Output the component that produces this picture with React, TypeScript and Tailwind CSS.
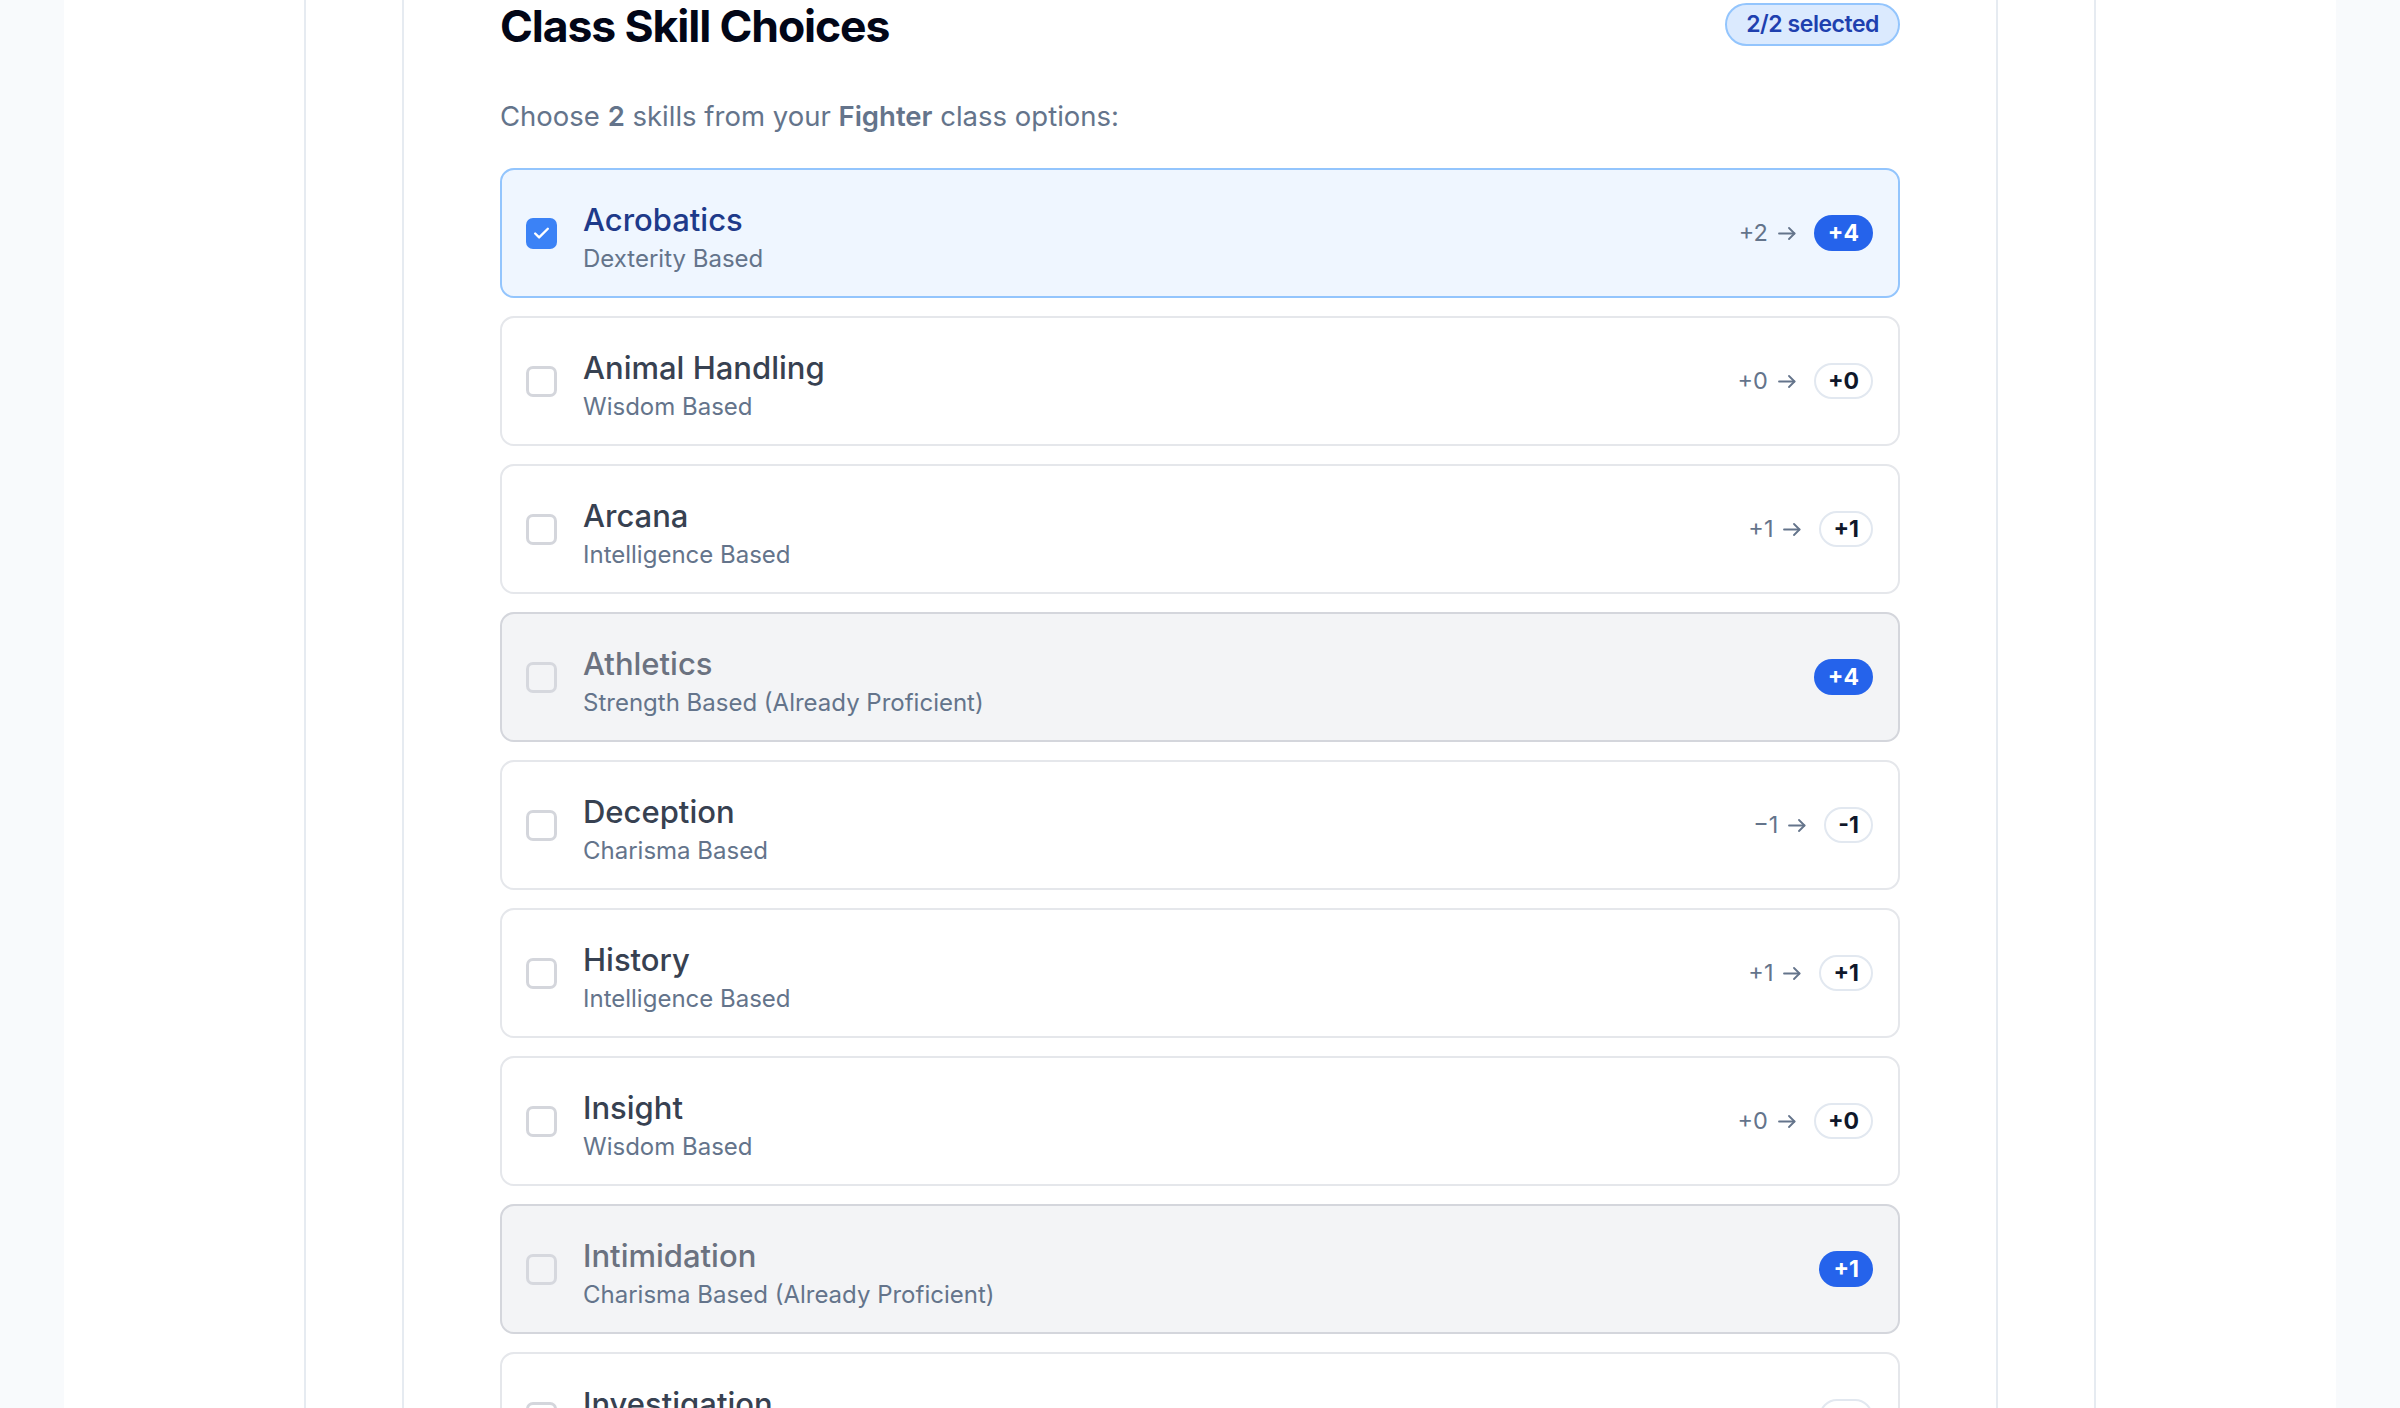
import React from "react";
import { Check } from "lucide-react";

type Skill = {
  name: string;
  ability: string;
  base?: string;
  total: string;
  state: "selected" | "normal" | "proficient";
};

const skills: Skill[] = [
  { name: "Acrobatics", ability: "Dexterity Based", base: "+2", total: "+4", state: "selected" },
  { name: "Animal Handling", ability: "Wisdom Based", base: "+0", total: "+0", state: "normal" },
  { name: "Arcana", ability: "Intelligence Based", base: "+1", total: "+1", state: "normal" },
  { name: "Athletics", ability: "Strength Based (Already Proficient)", total: "+4", state: "proficient" },
  { name: "Deception", ability: "Charisma Based", base: "\u22121", total: "-1", state: "normal" },
  { name: "History", ability: "Intelligence Based", base: "+1", total: "+1", state: "normal" },
  { name: "Insight", ability: "Wisdom Based", base: "+0", total: "+0", state: "normal" },
  { name: "Intimidation", ability: "Charisma Based (Already Proficient)", total: "+1", state: "proficient" },
  { name: "Investigation", ability: "Intelligence Based", base: "+1", total: "+1", state: "normal" },
];

function Arrow() {
  return (
    <svg width="18" height="13" viewBox="0 0 18 13" fill="none" className="shrink-0">
      <path d="M1 6.5H16.5" stroke="#64748b" strokeWidth="1.8" strokeLinecap="round" />
      <path d="M11 1L16.5 6.5L11 12" stroke="#64748b" strokeWidth="1.8" strokeLinecap="round" strokeLinejoin="round" />
    </svg>
  );
}

function SkillCard({ s }: { s: Skill }) {
  const selected = s.state === "selected";
  const prof = s.state === "proficient";
  const cardCls = selected
    ? "border-[#93c5fd] bg-[#eff6ff]"
    : prof
    ? "border-[#d4d6dc] bg-[#f3f4f6]"
    : "border-[#e5e7eb] bg-white";
  const titleCls = selected ? "text-[#1e3a8a]" : prof ? "text-[#6b7280]" : "text-[#374151]";
  return (
    <div className={`h-[130px] shrink-0 rounded-[14px] border-2 pl-[24px] pr-[25px] flex items-center ${cardCls}`}>
      {selected ? (
        <div className="w-[31px] h-[31px] rounded-[7px] bg-[#3b82f6] flex items-center justify-center shrink-0">
          <Check size={19} strokeWidth={3} color="#ffffff" />
        </div>
      ) : (
        <div
          className={`w-[31px] h-[31px] rounded-[7px] border-[3px] shrink-0 ${
            prof ? "border-[#d6d8de] bg-[#f3f4f6]" : "border-[#d4d6dc] bg-white"
          }`}
        />
      )}
      <div className="ml-[26px] flex flex-col pt-[11px] flex-1">
        <div className={`text-[31px] leading-[40px] font-medium ${titleCls}`}>{s.name}</div>
        <div className="text-[24px] leading-[38px] text-[#64748b]">{s.ability}</div>
      </div>
      <div className="flex items-center">
        {s.base && (
          <div className="flex items-center mr-[18px]">
            <span className="text-[23.5px] leading-[30px] text-[#64748b]">{s.base}</span>
            <span className="ml-[10px] flex items-center">
              <Arrow />
            </span>
          </div>
        )}
        {selected || prof ? (
          <div className="h-[36px] px-[14px] rounded-full bg-[#2563eb] text-white text-[23px] font-bold flex items-center">
            {s.total}
          </div>
        ) : (
          <div className="h-[36px] px-[12px] rounded-full border-2 border-[#e2e8f0] bg-white text-[#0f172a] text-[23px] font-bold flex items-center">
            {s.total}
          </div>
        )}
      </div>
    </div>
  );
}

export default function App() {
  return (
    <div className="h-[1408px] overflow-hidden bg-[#f8fafc] flex justify-center font-['Inter','Noto_Sans',sans-serif]">
      <div className="w-[2272px] bg-white flex justify-center">
        <div className="w-[1792px] border-x-2 border-[#e6ebf1] flex justify-center">
          <div className="w-[1596px] border-x-2 border-[#e6ebf1] px-[96px]">
            <div className="h-[48px] flex items-center justify-between">
              <h1 className="text-[44.5px] leading-[48px] mt-[3px] font-bold tracking-[-0.025em] text-[#020617]">
                Class Skill Choices
              </h1>
              <div className="h-[43px] px-[19px] rounded-full border-2 border-[#93c5fd] bg-[#dbeafe] text-[#1e40af] text-[23px] font-semibold tracking-[-0.02em] flex items-center">
                2/2 selected
              </div>
            </div>
            <p className="mt-[48px] text-[27.5px] leading-[40px] text-[#64748b]">
              Choose <span className="font-semibold">2</span> skills from your{" "}
              <span className="font-semibold">Fighter</span> class options:
            </p>
            <div className="mt-[32px] flex flex-col gap-[18px]">
              {skills.map((s) => (
                <SkillCard key={s.name} s={s} />
              ))}
            </div>
          </div>
        </div>
      </div>
    </div>
  );
}
